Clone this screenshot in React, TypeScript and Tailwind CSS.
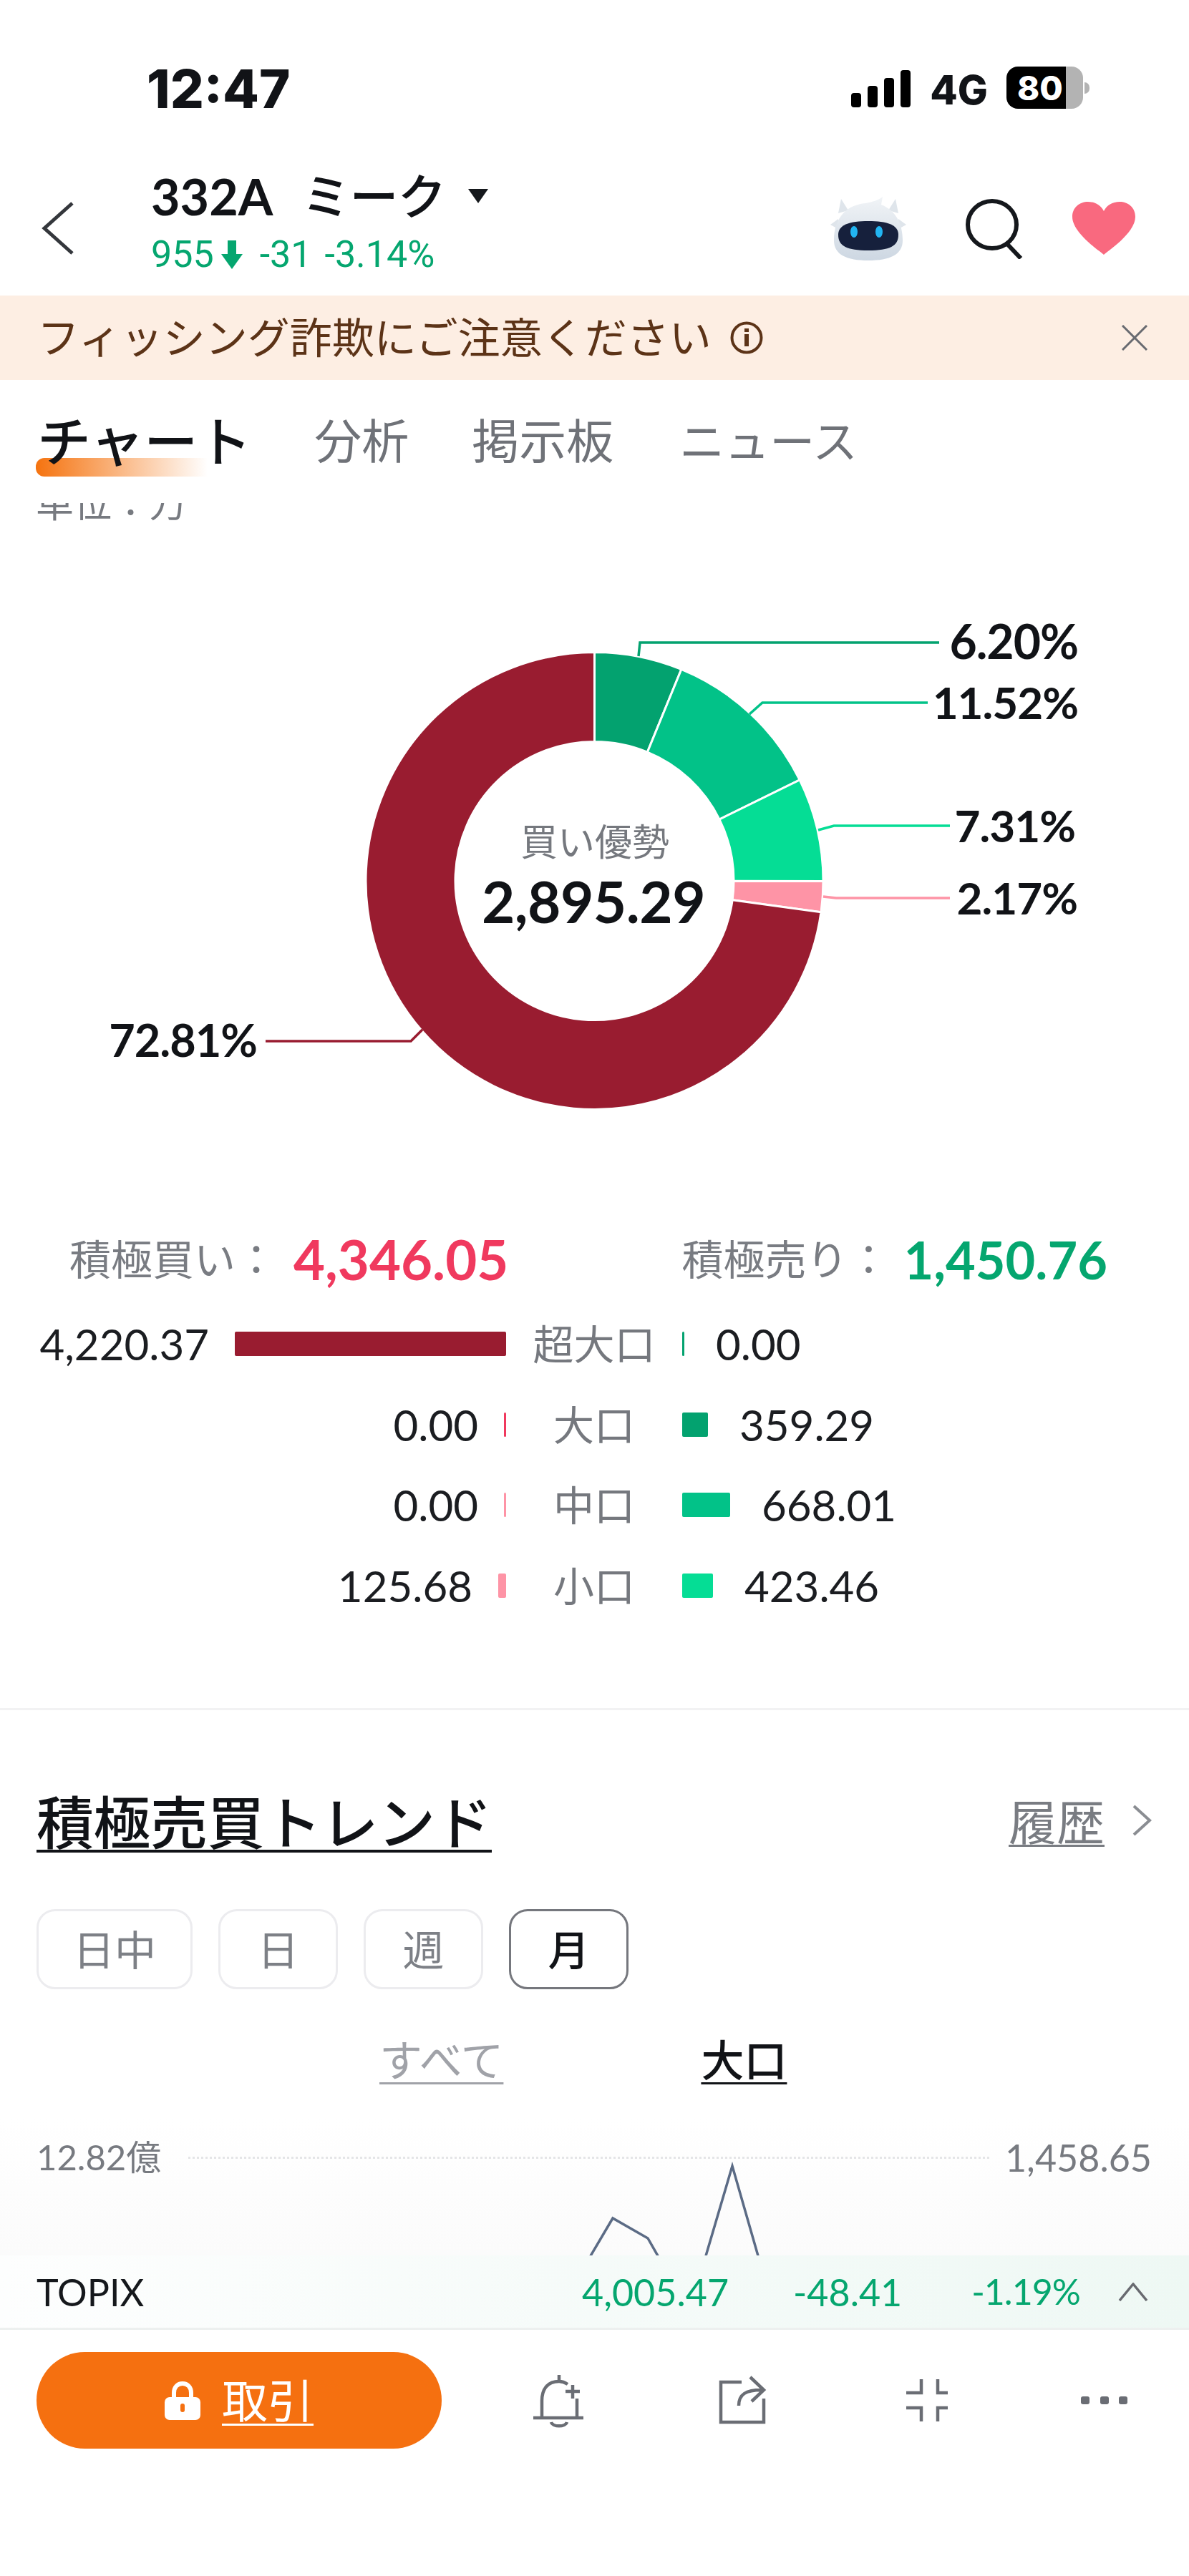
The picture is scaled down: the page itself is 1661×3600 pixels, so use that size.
const GREEN = "#05a66f";

function arc(startPct: number, endPct: number) {
  const cx = 830.5, cy = 1231, R = 319.5, r = 194.5;
  const a0 = (startPct / 100) * Math.PI * 2, a1 = (endPct / 100) * Math.PI * 2;
  const pt = (rad: number, a: number) => `${(cx + rad * Math.sin(a)).toFixed(2)} ${(cy - rad * Math.cos(a)).toFixed(2)}`;
  const large = endPct - startPct > 50 ? 1 : 0;
  return `M${pt(R, a0)} A${R} ${R} 0 ${large} 1 ${pt(R, a1)} L${pt(r, a1)} A${r} ${r} 0 ${large} 0 ${pt(r, a0)} Z`;
}

const segments = [
  { from: 0, to: 6.2, color: "#03a26f" },
  { from: 6.2, to: 17.72, color: "#02c288" },
  { from: 17.72, to: 25.03, color: "#05dd95" },
  { from: 25.03, to: 27.19, color: "#fe94a6" },
  { from: 27.19, to: 100, color: "#991c30" },
];

const leaders = [
  { d: "M892 917 L894 898 H1312", color: "#03a26f" },
  { d: "M1047 998 L1065 982 H1296", color: "#02c288" },
  { d: "M1143 1160 L1165 1154 H1327", color: "#05dd95" },
  { d: "M1150 1253 L1168 1255 H1327", color: "#fe94a6" },
  { d: "M590 1439 L574 1455 H371", color: "#991c30" },
];

const labels = [
  { x: 1506, y: 921, t: "6.20%", size: 66 },
  { x: 1506, y: 1005, t: "11.52%", size: 62 },
  { x: 1502, y: 1177, t: "7.31%", size: 62 },
  { x: 1505, y: 1278, t: "2.17%", size: 62 },
  { x: 359, y: 1477, t: "72.81%", size: 63 },
];

const rows = [
  { buy: "4,220.37", buyW: "w-[379px]", buyC: "bg-[#991c30]", name: "超大口", sell: "0.00", sellW: "w-[3px]", sellC: "bg-[#03a26f]" },
  { buy: "0.00", buyW: "w-[3px]", buyC: "bg-[#f0395e]", name: "大口", sell: "359.29", sellW: "w-[36px]", sellC: "bg-[#03a26f]" },
  { buy: "0.00", buyW: "w-[3px]", buyC: "bg-[#fe94a6]", name: "中口", sell: "668.01", sellW: "w-[67px]", sellC: "bg-[#02c288]" },
  { buy: "125.68", buyW: "w-[11px]", buyC: "bg-[#fe94a6]", name: "小口", sell: "423.46", sellW: "w-[43px]", sellC: "bg-[#05dd95]" },
];

function Robot() {
  return (
    <svg width="108" height="92" viewBox="0 0 108 92">
      <defs>
        <linearGradient id="shell" x1="0" y1="0" x2="0" y2="1">
          <stop offset="0" stopColor="#f1f4f7" />
          <stop offset="1" stopColor="#cdd7e2" />
        </linearGradient>
      </defs>
      <path d="M12 24 L16 4 L26 20 Z M96 24 L92 4 L82 20 Z" fill="#dfe5eb" />
      <path d="M1 40 L12 32 V46 Z M107 40 L96 32 V46 Z" fill="#dfe5eb" />
      <path d="M6 62 C6 28 26 12 50 10 C60 8 68 6 74 1 L72 12 C92 20 102 38 102 62 C102 82 84 90 54 90 C24 90 6 82 6 62 Z" fill="url(#shell)" />
      <path d="M12 54 C12 40 28 35 54 35 C80 35 96 40 96 54 C96 70 84 76 54 76 C24 76 12 70 12 54 Z" fill="#16203c" />
      <ellipse cx="34" cy="50" rx="5" ry="8" fill="#22b5f2" />
      <ellipse cx="69" cy="50" rx="5" ry="8" fill="#22b5f2" />
    </svg>
  );
}

export default function App() {
  return (
    <div className="w-full h-[3600px] overflow-hidden bg-white flex flex-col font-['Lato','Noto_Sans_CJK_JP',sans-serif] text-[#111317]">
      {/* status bar */}
      <div className="h-[236px] shrink-0 flex justify-between pl-[205px] pr-[139px] pt-[86px]">
        <span className="font-['Inter',sans-serif] font-extrabold text-[74px] leading-[76px]">12:47</span>
        <div className="flex items-start">
          <svg width="84" height="52" viewBox="0 0 84 52" className="mt-[12px]">
            <rect x="0" y="32" width="14" height="20" rx="4" />
            <rect x="23" y="22" width="14" height="30" rx="4" />
            <rect x="46" y="11" width="14" height="41" rx="4" />
            <rect x="69" y="0" width="14" height="52" rx="4" />
          </svg>
          <span className="ml-[26px] font-['Inter',sans-serif] font-extrabold text-[56px] leading-[70px] mt-[5px]">4G</span>
          <div className="ml-[26px] mt-[7px] w-[107px] h-[59px] rounded-[16px] bg-[linear-gradient(90deg,#000_78%,#b3b3b3_78%)] text-white font-['Inter',sans-serif] font-extrabold text-[47px] leading-[59px] pl-[15px]">80</div>
          <div className="w-[7px] h-[16px] mt-[29px] ml-[2px] rounded-r-full bg-[#b3b3b3]" />
        </div>
      </div>

      {/* nav */}
      <div className="h-[177px] shrink-0 flex pl-[58px] pr-[75px] relative">
        <svg width="46" height="76" viewBox="0 0 46 76" className="mt-[45px]" fill="none" stroke="#34373c" strokeWidth="5">
          <path d="M43 3 L4 38 L43 73" />
        </svg>
        <div className="ml-[107px] flex flex-col">
          <div className="flex items-center h-[92px] mt-[-6px]">
            <span className="font-bold text-[70px] leading-[92px] mt-[-4px]">332A</span>
            <span className="ml-[40px] font-medium text-[68px] leading-[92px] mt-[-4px] tracking-[-1px]">ミーク</span>
            <svg width="30" height="20" viewBox="0 0 30 20" className="ml-[32px] mt-[-4px]">
              <path d="M0 0 H28 L14 20 Z" fill="#15181c" />
            </svg>
          </div>
          <div className="flex items-center text-[52px] leading-[56px] mt-[6px] text-[#05a66f] font-['Roboto','Lato',sans-serif]">
            <span>955</span>
            <svg width="30" height="40" viewBox="0 0 30 40" className="ml-[10px]">
              <path d="M9 0 H21 V19 H30 L15 40 L0 19 H9 Z" fill={GREEN} />
            </svg>
            <span className="ml-[24px]">-31</span>
            <span className="ml-[18px]">-3.14%</span>
          </div>
        </div>
        <div className="ml-auto flex items-start">
          <div className="mt-[38px]"><Robot /></div>
          <svg width="82" height="84" viewBox="0 0 82 84" className="ml-[82px] mt-[42px]" fill="none" stroke="#15181c" strokeWidth="6">
            <ellipse cx="37" cy="36" rx="34" ry="33" />
            <path d="M58 63 L77 83" />
          </svg>
          <svg width="88" height="74" viewBox="0 0 88 74" className="ml-[67px] mt-[46px]">
            <path d="M44 74 C40 70 0 44 0 21 C0 8 10 0 22 0 C32 0 40 5 44 13 C48 5 56 0 66 0 C78 0 88 8 88 21 C88 44 48 70 44 74 Z" fill="#f9697f" />
          </svg>
        </div>
      </div>

      {/* warning banner */}
      <div className="h-[118px] shrink-0 bg-[#fdeee3] flex items-center pl-[52px] pr-[58px] text-[#5c3317]">
        <span className="text-[59px] leading-[118px]">フィッシング詐欺にご注意ください</span>
        <svg width="46" height="46" viewBox="0 0 46 46" className="ml-[26px]" fill="none">
          <circle cx="23" cy="23" r="20.5" stroke="#5c3317" strokeWidth="4" />
          <rect x="20" y="18" width="6" height="17" fill="#5c3317" />
          <rect x="20" y="10" width="6" height="5" fill="#5c3317" />
        </svg>
        <svg width="36" height="36" viewBox="0 0 36 36" className="ml-auto" stroke="#686a70" strokeWidth="3">
          <path d="M1 1 L35 35 M35 1 L1 35" />
        </svg>
      </div>

      {/* tabs */}
      <div className="h-[172px] shrink-0 flex items-start pl-[52px] pt-[40px] relative">
        <div className="relative">
          <span className="relative font-medium text-[75px] leading-[90px] z-10">チャート</span>
          <div className="absolute left-[-2px] top-[69px] w-[240px] h-[26px] rounded-l-[12px] bg-[linear-gradient(90deg,#f5730f,rgba(245,115,15,0))]" />
        </div>
        <span className="ml-[88px] text-[66px] leading-[90px] text-[#6f7278]">分析</span>
        <span className="ml-[88px] text-[66px] leading-[90px] text-[#6f7278]">掲示板</span>
        <span className="ml-[92px] text-[63px] leading-[90px] text-[#6f7278]">ニュース</span>
      </div>

      {/* clipped unit line, scrolled under the tabs */}
      <div className="h-[137px] shrink-0 overflow-hidden pl-[50px]">
        <div className="mt-[-30px] text-[53px] leading-[60px] text-[#777a80]">単位：万</div>
      </div>

      {/* donut */}
      <div className="h-[720px] shrink-0">
        <svg width="1661" height="720" viewBox="0 840 1661 720" className="block">
          {segments.map((s) => (
            <path key={s.color} d={arc(s.from, s.to)} fill={s.color} stroke="#fff" strokeWidth="3" />
          ))}
          {leaders.map((l) => (
            <path key={l.color} d={l.d} fill="none" stroke={l.color} strokeWidth="3.5" />
          ))}
          {labels.map((l) => (
            <text key={l.t} x={l.x} y={l.y} textAnchor="end" fontSize={l.size} fontWeight="700" fill="#111317" letterSpacing="-1">{l.t}</text>
          ))}
          <text x="831" y="1196" textAnchor="middle" fontSize="52" fill="#75787e">買い優勢</text>
          <text x="829" y="1290" textAnchor="middle" fontSize="80" fontWeight="700" fill="#111317" letterSpacing="-0.5">2,895.29</text>
        </svg>
      </div>

      {/* buy / sell totals */}
      <div className="h-[106px] shrink-0 flex items-center mt-[147px] pl-[97px]">
        <span className="text-[58px] leading-[70px] text-[#797c82] w-[313px]">積極買い：</span>
        <span className="font-bold text-[76px] leading-[70px] text-[#f0395e]">4,346.05</span>
        <span className="ml-auto text-[58px] leading-[70px] text-[#797c82]">積極売り：</span>
        <span className="ml-[20px] mr-[114px] font-bold text-[72px] leading-[70px] text-[#05a66f]">1,450.76</span>
      </div>

      {/* size breakdown */}
      <div className="flex flex-col mt-[9px]">
        {rows.map((r) => (
          <div key={r.name} className="h-[112.5px] shrink-0 flex items-center">
            <div className="w-[707px] flex items-center justify-end shrink-0">
              <span className="text-[60px] leading-[70px] text-[#1b1d21]">{r.buy}</span>
              <div className={`${r.buyW} ${r.buyC} h-[34px] ml-[36px] rounded-[2px]`} />
            </div>
            <div className="w-[246px] shrink-0 text-center text-[57px] leading-[70px] text-[#75787e]">{r.name}</div>
            <div className={`${r.sellW} ${r.sellC} h-[34px] rounded-[2px]`} />
            <span className="ml-[44px] text-[60px] leading-[70px] text-[#1b1d21]">{r.sell}</span>
          </div>
        ))}
      </div>

      {/* divider */}
      <div className="h-[3px] shrink-0 bg-[#f2f2f3] mt-[115px]" />

      {/* trend */}
      <div className="h-[762px] shrink-0 overflow-hidden flex flex-col bg-[linear-gradient(180deg,#fff_75%,#fbfbfb_100%)]">
        <div className="flex items-start pl-[51px] pr-[52px] pt-[106px] h-[278px] shrink-0">
          <span className="font-medium text-[80px] leading-[100px] underline decoration-[4px] underline-offset-[8px] tracking-[-0.5px]">積極売買トレンド</span>
          <span className="ml-auto text-[67px] leading-[100px] text-[#797c82] underline decoration-[3px] underline-offset-[6px]">履歴</span>
          <svg width="28" height="44" viewBox="0 0 28 44" className="ml-[38px] mt-[26px]" fill="none" stroke="#8a8d92" strokeWidth="4">
            <path d="M3 2 L25 22 L3 42" />
          </svg>
        </div>
        <div className="flex pl-[51px] gap-[36px] h-[175px] shrink-0">
          {["日中", "日", "週", "月"].map((t, i) => (
            <div key={t} className={`${i === 0 ? "w-[218px]" : "w-[167px]"} ${i === 3 ? "border-[#75777d] text-[#111317] font-medium" : "border-[#ececef] text-[#7d8086]"} h-[112px] rounded-[26px] border-[3px] flex items-center justify-center text-[58px]`}>
              {t}
            </div>
          ))}
        </div>
        <div className="flex h-[145px] shrink-0 pl-[530px]">
          <span className="text-[60px] leading-[72px] text-[#a0a2a8] underline decoration-[3px] underline-offset-[8px]">すべて</span>
          <span className="ml-[276px] font-medium text-[60px] leading-[72px] underline decoration-[3px] underline-offset-[8px]">大口</span>
        </div>
        <div className="flex items-center pl-[51px] pr-[52px] h-[54px] shrink-0 text-[52px] text-[#777a80]">
          <span className="text-[49px]">12.82億</span>
          <div className="flex-1 ml-[38px] mr-[22px] border-t-[3px] border-dotted border-[#e4e5e7]" />
          <span>1,458.65</span>
        </div>
        <svg width="1661" height="132" viewBox="0 3020 1661 132" className="block shrink-0 mt-[-22px]" fill="none" stroke="#5b6b85" strokeWidth="3.5">
          <path d="M823 3156 L856 3100 L905 3128 L921 3156" />
          <path d="M985 3156 L1023 3027 L1060 3156" />
        </svg>
      </div>

      {/* index ticker */}
      <div className="h-[104px] shrink-0 flex items-center pl-[51px] border-b-[3px] border-[#edf0ef] text-[52px] bg-[linear-gradient(90deg,#fdfefe,#eef8f4)]">
        <span className="w-[762px] text-[#15181c]">TOPIX</span>
        <span className="text-[#05a66f]">4,005.47</span>
        <span className="ml-[90px] text-[#05a66f]">-48.41</span>
        <span className="ml-[97px] text-[50px] tracking-[-1px] text-[#05a66f]">-1.19%</span>
        <svg width="42" height="26" viewBox="0 0 42 26" className="ml-[53px]" fill="none" stroke="#686a70" strokeWidth="3.5">
          <path d="M2 25 L21 2 L40 25" />
        </svg>
      </div>

      {/* bottom toolbar */}
      <div className="flex items-start pl-[51px] pt-[31px]">
        <div className="w-[566px] h-[135px] rounded-full bg-[#f57010] flex items-center justify-center gap-[30px] text-white">
          <svg width="50" height="54" viewBox="0 0 50 54">
            <path d="M13 24 V16 C13 8 18 3 25 3 C32 3 37 8 37 16 V24" fill="none" stroke="#fff" strokeWidth="6" />
            <rect x="0" y="22" width="50" height="32" rx="7" fill="#fff" />
            <rect x="22" y="31" width="6" height="12" rx="3" fill="#f57010" />
          </svg>
          <span className="text-[64px] leading-[70px] underline decoration-[3px] underline-offset-[8px]">取引</span>
        </div>
        <svg width="1044" height="80" viewBox="617 3318 1044 80" className="mt-[31px]" fill="none" stroke="#6a6d74" strokeWidth="4.5">
          <path d="M781 3328 V3319 M781 3328 C764 3328 757 3340 757 3355 V3378 M745 3379 H815 M806 3379 V3352 M800 3333 V3352 M790 3342 H810 M770 3385 C772 3392 790 3392 792 3385 M781 3328 C786 3328 790 3330 793 3332" />
          <path d="M1036 3329 H1007 V3385 H1067 V3352 M1032 3362 C1032 3346 1042 3340 1064 3340 M1048 3322 L1067 3340 L1050 3356" />
          <path d="M1287 3325 V3344 H1266 M1310 3325 V3344 H1324 M1287 3384 V3365 H1266 M1310 3384 V3365 H1324" />
          <g fill="#6a6d74" stroke="none">
            <rect x="1510" y="3349" width="12" height="11" rx="3" />
            <rect x="1537" y="3349" width="12" height="11" rx="3" />
            <rect x="1563" y="3349" width="12" height="11" rx="3" />
          </g>
        </svg>
      </div>
    </div>
  );
}
